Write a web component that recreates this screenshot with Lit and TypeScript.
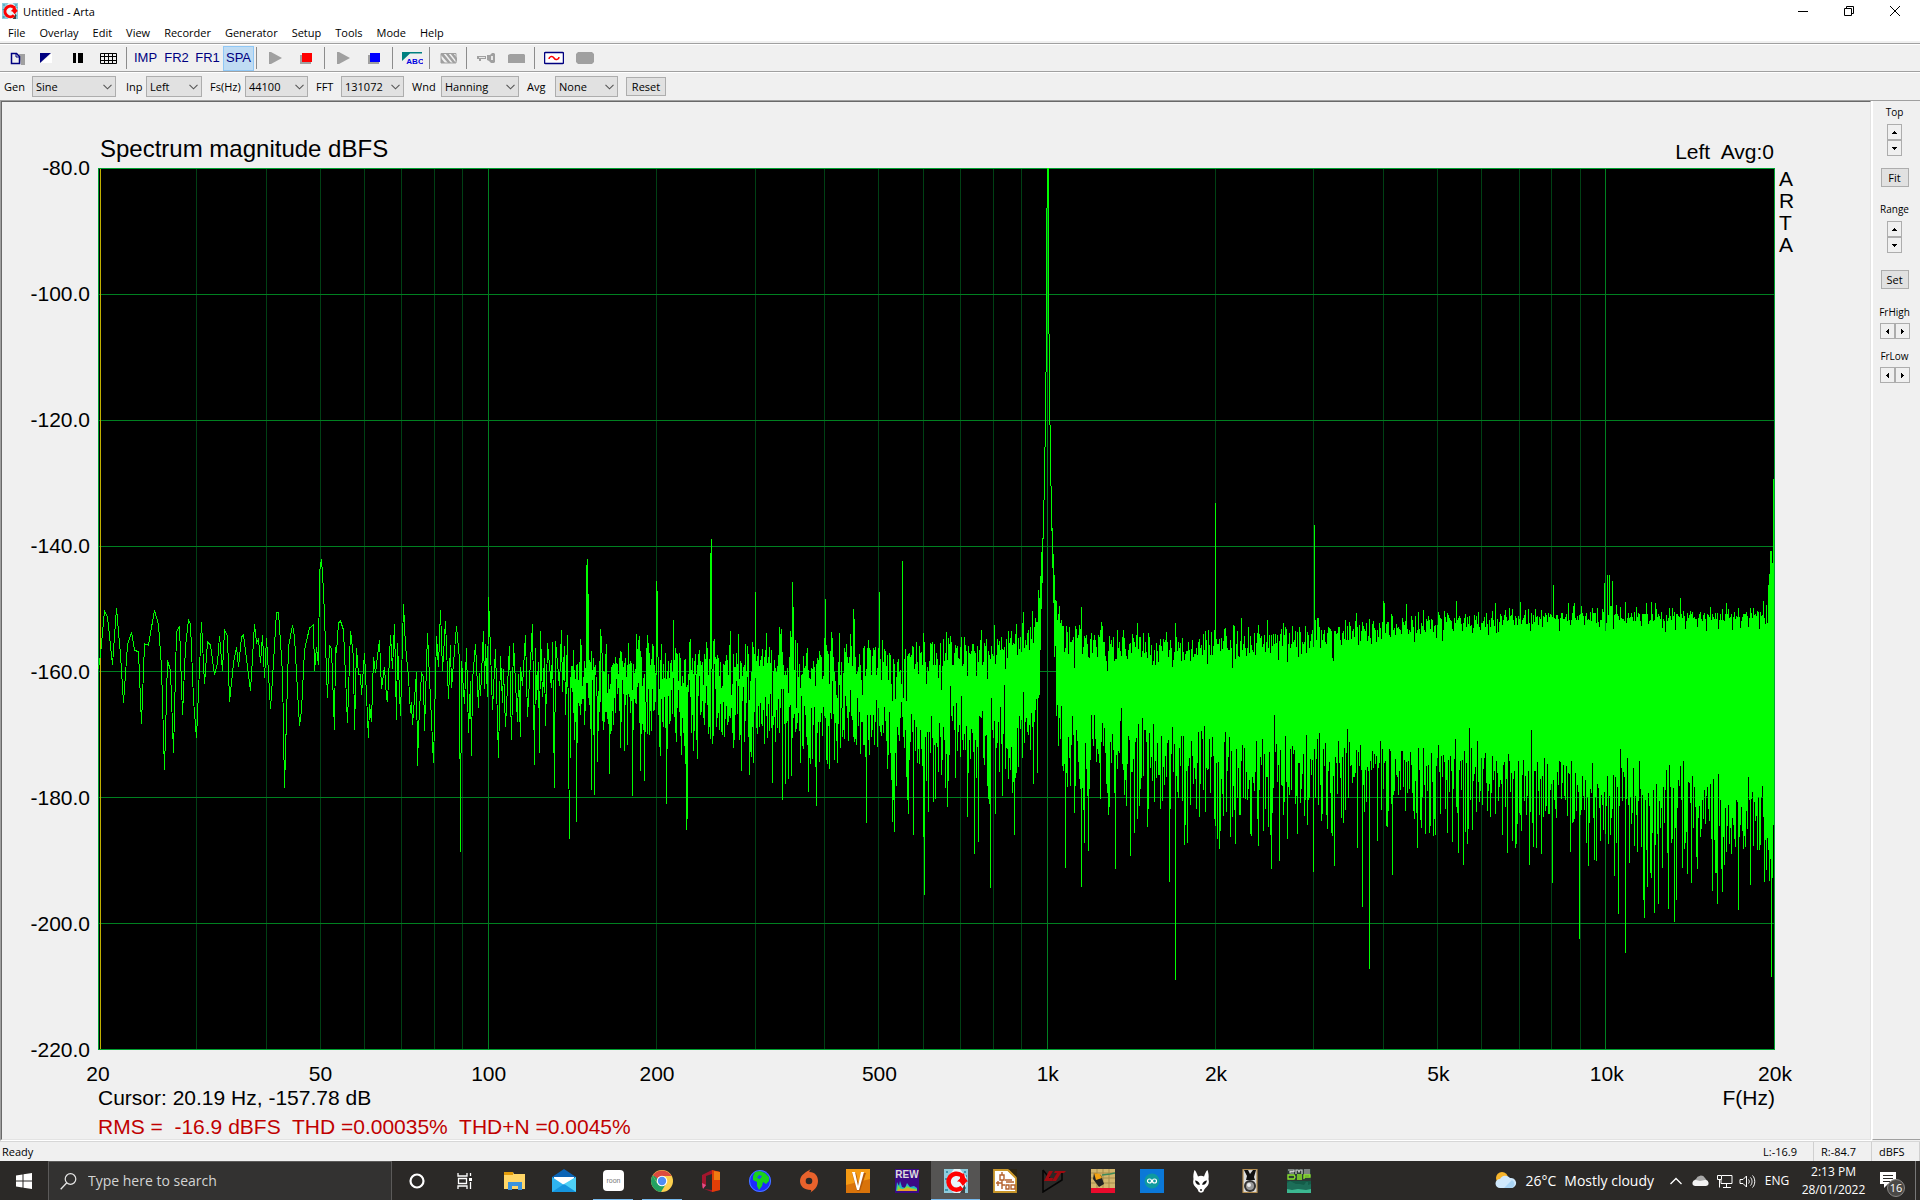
import { LitElement, html, svg, css } from "lit";
import { customElement, property } from "lit/decorators.js";
import { classMap } from "lit/directives/class-map.js";
import { styleMap } from "lit/directives/style-map.js";

/* ------------------------------------------------------------------ */
/* Spectrum data                                                       */
/* ------------------------------------------------------------------ */

const PLOT_W = 1677;
const PLOT_H = 882;
const DB_TOP = -80;
const DB_BOTTOM = -220;
const F_LOW = 20;
const DECADES = 3;

const freqToRatio = (f: number) => Math.log10(f / F_LOW) / DECADES;
const dbToRatio = (db: number) => (DB_TOP - db) / (DB_TOP - DB_BOTTOM);

type Point = [number, number];

interface Block {
  x: number;
  y: number;
  sx: number;
  sy: number;
}

function parse(block: Block, text: string): Point[] {
  return text
    .trim()
    .split(/\s+/)
    .map((pair) => {
      const [x, y] = pair.split(",").map(Number);
      return [Math.floor(block.x + x / block.sx), Math.round(block.y + y / block.sy)] as Point;
    });
}

const LOW: Block = { x: -8, y: 372, sx: 3, sy: 3 };
const MID: Block = { x: 462, y: 332, sx: 3, sy: 3 };
const HIGH: Block = { x: 942, y: 312, sx: 3, sy: 3 };
const TOP: Block = { x: 1302, y: 292, sx: 3, sy: 2.904 };

const LOW_LINE = `24,386 30,345 43,213 53,232 67,374 80,204 92,345 100,489 112,315 124,277 133,331 144,335 154,551
164,311 176,316 193,210 205,255 214,380 223,689 232,361 241,392 250,638 259,275 268,259 277,524 287,320 295,240
301,252 310,480 319,593 334,246 343,431 352,307 361,315 373,404 382,370 388,288 397,392 403,270 412,288 418,485
430,370 439,322 445,382 454,291 460,286 481,452 493,252 499,310 505,298 511,368 517,286 523,413 529,294 541,506
550,370 559,216 565,216 577,400 583,743 595,322 607,255 613,290 628,557 634,510 643,330 658,265 670,256 673,392
679,321 685,374 688,100 694,57 699,150 712,473 718,316 724,328 733,569 736,322 740,338 745,250 751,243 760,270
772,548 781,273 790,350 793,569 799,324 805,402 811,404 814,464 824,340 835,593 838,492 844,545 850,351 856,398
868,300 874,446 883,381 888,470 892,485 901,286 907,386 913,252 919,539 923,310 931,527 940,192 947,318 955,410
961,518 964,487 967,554 979,396 982,677 985,570 994,400 1000,410 1003,572 1012,279 1018,415 1030,668 1039,289
1045,382 1051,210 1057,394 1066,244 1075,476 1081,315 1084,443 1099,259 1108,360 1111,935 1114,363 1123,491
1129,324 1135,578 1141,423 1144,647 1147,420 1156,312 1165,503 1168,400 1171,467 1180,274 1183,446 1186,312
1192,470 1195,171 1201,330 1207,509 1217,328 1225,653 1231,349 1237,488 1240,388 1246,560 1258,319 1264,599
1269,310 1281,545 1285,402 1291,590 1292,381 1297,437 1306,286 1312,530 1327,252 1333,674 1336,324 1339,480
1345,366 1348,638 1351,274 1357,470 1363,354 1366,557 1372,310 1384,443 1386,307 1393,743 1397,304 1408,437
1414,270 1417,455 1423,319 1426,524 1432,286 1438,896`;

const MID_TOPS = `1,400 4,390 7,465 10,495 13,438 16,545 19,438 22,405 25,484 28,534 31,530 37,498 46,537 49,495 52,492
55,540 58,486 61,417 64,435 67,558 70,530 76,504 79,195 82,177 85,282 88,480 91,486 97,510 103,500 106,495 109,532
112,588 115,573 118,484 121,387 124,408 127,459 130,514 136,462 139,432 142,579 145,522 148,567 151,552 157,495
163,492 166,471 172,492 178,474 184,456 187,484 196,474 199,530 205,429 208,492 217,570 220,492 229,402 232,447
235,420 238,408 241,453 244,471 247,558 250,534 256,606 259,444 262,405 265,430 268,459 274,477 277,432 280,438
283,495 289,243 292,273 295,471 298,567 301,480 304,432 307,537 310,492 316,459 319,537 322,514 328,534 334,480
337,516 340,360 346,444 349,459 355,543 358,459 364,558 367,528 370,549 376,477 379,561 382,555 388,426 391,417
394,510 403,484 406,462 409,522 412,495 418,450 424,495 430,555 439,426 442,444 445,525 451,159 454,117 457,507
460,423 463,417 466,471 472,465 475,474 484,564 487,558 493,495 499,465 502,480 508,435 511,393 514,585 517,552
523,500 529,459 532,492 535,402 541,484 547,528 550,500 556,432 562,438 565,462 568,600 571,543 577,426 580,441
583,462 586,276 589,484 595,447 598,498 604,468 607,447 613,471 616,450 619,399 622,490 628,441 634,450 637,648
640,514 646,504 652,498 655,465 658,381 661,402 664,387 670,495 676,514 682,504 685,579 688,471 691,393 694,411
697,246 700,321 703,510 706,420 709,624 712,429 715,531 721,564 727,522 733,504 739,459 742,444 745,510 751,537
754,504 760,484 766,558 769,492 775,480 778,453 781,465 787,537 793,414 796,297 799,435 802,453 805,462 808,552
814,396 817,414 820,471 826,543 829,585 832,594 835,486 838,399 844,486 847,624 850,519 853,444 859,432 862,471
871,402 874,438 880,327 883,357 886,471 892,516 898,462 904,540 907,585 910,444 913,438 916,528 925,420 931,450
934,525 940,444 946,441 949,525 958,276 961,477 964,540 967,420 970,486 979,498 985,540 988,459 991,465 994,552
997,603 1000,477 1003,492 1006,597 1009,531 1015,477 1018,516 1024,552 1027,183 1030,594 1033,477 1039,603
1042,468 1045,462 1051,471 1057,438 1060,441 1063,507 1069,426 1075,522 1078,438 1084,456 1090,399 1093,426
1096,486 1099,552 1105,514 1117,426 1120,495 1129,459 1135,534 1141,429 1144,570 1150,417 1159,396 1165,414
1171,408 1174,426 1180,495 1183,459 1192,438 1198,477 1204,411 1207,498 1213,411 1216,435 1222,528 1231,462
1243,453 1249,528 1252,438 1264,390 1267,495 1276,438 1282,537 1285,453 1294,438 1303,375 1306,492 1315,435
1324,411 1333,441 1336,507 1345,393 1354,393 1360,429 1369,372 1366,402 1372,465 1378,447 1387,370 1390,336
1396,420 1402,400 1405,390 1411,381 1417,333 1420,430 1423,381 1426,354 1429,366 1432,366 1435,270 1438,294
1441,228 1444,156 1447,114 1450,0`;

const MID_LOWS = `1,480 4,500 7,575 10,564 13,545 16,645 19,486 22,486 25,582 28,1017 31,774 34,564 37,576 40,640 43,720
46,666 49,966 52,729 55,610 61,645 64,612 67,597 70,597 73,675 76,633 79,549 82,550 85,594 88,615 91,687 94,870
97,540 100,705 103,885 106,524 109,588 112,786 115,693 118,636 121,606 124,460 127,663 130,690 133,666 136,636
139,636 142,658 145,672 148,822 151,702 154,693 157,633 160,675 163,594 169,537 172,582 175,564 178,633 181,744
187,540 190,582 193,753 196,615 199,585 202,735 205,582 208,591 211,640 214,603 217,888 220,690 223,597 229,612
232,561 235,549 238,669 241,813 244,702 247,672 250,690 253,843 256,696 259,606 265,567 271,633 277,567 283,630
286,606 289,525 292,471 295,645 298,741 301,768 304,597 310,681 313,591 319,912 322,747 325,588 331,663 334,570
337,642 340,534 343,651 349,726 352,624 355,570 361,708 364,765 367,654 370,699 373,738 376,792 379,990 382,957
385,576 388,540 391,591 394,699 400,753 403,693 406,525 409,720 412,777 415,588 418,528 424,636 430,654 436,609
439,558 445,702 448,681 451,717 454,507 457,732 460,708 463,492 466,567 472,654 475,640 478,690 481,612 487,705
490,606 493,711 499,618 505,666 511,654 514,624 517,699 520,744 523,720 526,645 529,543 532,642 535,558 538,720
541,705 544,813 547,603 550,561 553,726 556,663 559,609 562,531 565,711 568,825 571,756 574,771 577,681 580,789
586,534 589,684 592,702 595,618 598,681 604,672 610,630 613,732 619,648 622,714 625,612 628,693 631,582 634,684
637,849 640,675 646,726 649,630 655,597 661,624 664,567 667,900 670,567 676,852 679,669 685,837 688,621 691,615
694,828 697,714 700,654 709,687 712,669 718,693 721,789 727,738 730,747 736,645 742,735 745,876 748,774 751,792
754,624 757,777 760,675 766,801 769,918 772,699 778,786 781,666 787,708 790,621 796,654 799,780 802,792 805,678
808,807 811,639 817,543 820,642 823,780 829,723 832,789 838,555 841,744 844,624 850,690 853,717 856,588 862,654
865,723 871,570 877,660 880,711 883,726 889,735 892,594 898,636 901,762 904,666 910,735 916,771 919,969 922,645
925,720 928,765 934,711 937,690 940,645 943,735 946,666 952,741 958,678 961,696 964,708 967,675 973,621 979,723
982,807 985,765 988,636 991,759 994,840 997,966 1000,900 1003,996 1006,759 1009,858 1012,681 1018,723 1021,654
1027,651 1030,711 1033,744 1036,690 1039,831 1042,900 1045,942 1048,780 1051,726 1057,696 1060,1005 1063,660
1066,753 1069,681 1072,789 1075,747 1078,792 1081,690 1087,798 1090,1010 1093,1185 1096,711 1099,843 1102,696
1105,936 1111,759 1117,714 1120,906 1123,735 1126,897 1129,729 1135,816 1141,711 1144,825 1147,780 1150,681
1156,864 1159,762 1162,921 1165,843 1168,765 1171,558 1177,663 1180,618 1186,834 1189,609 1192,753 1201,771
1204,588 1213,702 1219,678 1222,951 1225,820 1231,777 1234,687 1240,756 1243,1062 1246,720 1249,834 1252,741
1255,1026 1258,648 1267,633 1270,774 1273,795 1276,708 1282,858 1285,897 1288,912 1291,1164 1294,594 1300,714
1303,663 1306,942 1309,744 1315,666 1318,816 1324,732 1327,888 1330,702 1333,555 1336,807 1342,747 1345,837
1348,774 1351,810 1354,741 1357,879 1360,846 1363,1005 1366,834 1369,819 1372,684 1375,801 1381,687 1384,660
1390,576 1393,729 1399,654 1402,696 1405,705 1408,675 1411,750 1414,640 1417,681 1420,852 1423,666 1426,630
1429,597 1432,819 1435,594 1438,585 1441,450 1444,326 1447,248 1450,117`;

const HIGH_TOPS = `49,362 52,420 55,402 58,378 61,430 64,420 67,438 70,438 73,516 76,504 79,438 82,456 85,522 88,441
91,486 94,486 97,480 100,471 103,564 106,438 109,447 112,474 115,465 118,435 121,447 124,381 127,522 130,500
133,468 136,474 139,465 142,492 145,531 148,534 151,477 154,459 157,519 160,480 163,465 166,480 172,531 175,465
181,450 184,426 187,438 190,486 196,528 199,543 202,573 205,514 211,492 217,500 220,471 223,543 226,537 229,537
232,450 235,504 244,528 250,450 253,474 259,528 262,537 268,492 274,519 280,474 286,500 289,465 292,429 295,507
298,471 304,531 310,459 313,519 322,534 325,459 331,525 337,555 340,543 343,510 346,555 349,489 355,546 361,477
367,514 373,486 379,456 385,531 391,480 397,561 400,540 406,429 409,471 412,514 421,489 424,543 427,474 433,540
442,514 451,543 457,480 460,531 466,522 472,525 478,477 484,495 490,462 493,510 496,453 502,552 505,450 508,495
514,456 517,525 523,450 526,69 529,477 535,492 541,514 547,507 553,447 556,444 559,468 565,510 574,504 577,564
580,435 583,438 586,537 592,453 595,528 598,531 601,483 604,414 607,510 613,468 619,528 625,441 628,519 631,468
640,516 643,459 646,525 652,459 655,435 661,474 667,500 676,516 682,420 691,519 694,465 703,492 715,540 721,462
724,447 727,498 730,429 736,441 739,447 742,546 751,504 757,438 763,480 769,500 775,531 778,441 784,522 793,486
796,438 799,519 808,504 814,462 820,500 823,135 826,420 829,480 832,414 835,414 838,441 841,504 844,450 847,480
853,450 859,492 865,441 868,444 874,453 877,534 880,543 883,453 889,462 898,441 904,495 910,453 916,420 922,438
925,480 928,426 934,477 940,447 946,423 949,399 952,441 955,495 961,484 967,426 970,438 979,429 982,484 988,417
994,492 997,432 1000,423 1009,486 1018,429 1024,477 1030,363 1033,369 1036,459 1039,432 1042,426 1051,471
1054,402 1057,408 1060,450 1075,441 1087,414 1096,423 1099,372 1105,462 1114,408 1117,420 1123,486 1126,408
1129,459 1135,396 1141,462 1150,390 1156,459 1165,408 1174,417 1180,456 1189,474 1195,396 1198,405 1201,414
1207,484 1213,393 1222,399 1225,405 1231,420 1240,453 1243,414 1249,363 1255,414`;

const HIGH_LOWS = `49,708 52,675 55,798 58,714 61,777 64,678 67,858 70,873 73,852 76,1164 79,879 82,921 85,771 88,834
91,918 94,795 97,708 100,765 103,999 106,918 109,750 112,783 115,846 118,897 121,927 124,1221 127,924 130,990
133,1089 136,789 139,867 142,948 145,1113 148,927 151,840 154,705 157,777 160,798 163,705 166,777 172,807 175,822
178,850 181,957 184,786 187,729 190,798 193,744 196,820 199,912 202,939 205,1005 208,981 211,786 214,850 220,810
223,939 226,1167 229,825 232,867 235,813 238,819 241,723 244,684 247,852 250,870 253,945 256,900 259,978 262,852
268,780 271,1128 274,876 277,876 280,837 283,1059 286,786 289,774 292,1017 295,732 298,978 301,927 304,894
307,714 310,888 313,750 316,750 319,786 322,1041 325,987 328,759 331,864 337,903 343,966 346,843 352,789 355,885
358,885 361,987 364,768 367,963 370,861 373,915 376,828 379,891 385,780 388,1206 391,987 394,822 400,876 403,792
406,1500 409,888 412,936 415,954 418,804 421,858 424,768 427,963 430,768 433,1095 436,1035 439,873 442,1089
448,834 451,975 454,783 460,912 463,864 469,987 475,756 478,1011 481,912 484,753 487,777 490,930 493,738 496,996
499,864 505,867 508,777 511,939 517,771 520,828 523,1017 526,1038 529,850 532,1077 535,846 538,1107 541,1053
544,897 550,1008 553,786 559,996 562,873 565,831 571,1071 574,813 577,1011 580,918 583,990 586,1092 589,807
592,954 595,864 598,1005 601,1005 604,843 610,954 613,804 619,876 622,960 628,900 631,1062 634,1068 637,891
643,933 649,783 652,1017 655,1098 658,930 664,855 670,1053 673,822 676,987 679,891 685,1041 688,816 691,1065
694,1167 697,999 700,924 703,705 706,816 712,906 718,1143 721,810 724,915 730,1005 733,966 739,906 742,1077
745,921 751,807 754,930 760,822 766,972 769,948 772,1062 775,850 781,969 784,927 790,822 793,1008 799,765
802,1035 805,960 811,837 814,885 817,840 820,1176 823,807 829,837 832,777 835,975 838,759 841,915 844,1023
847,1002 850,807 853,858 859,1005 862,1047 868,846 874,1059 877,1068 880,888 883,1158 886,831 892,942 895,783
898,850 904,1014 907,831 910,1029 916,990 922,747 925,954 928,786 934,855 937,909 946,879 949,810 952,1104
955,816 961,795 964,870 967,1281 970,915 973,996 976,870 979,966 985,873 988,1467 991,843 997,813 1006,852
1012,1083 1018,850 1021,783 1024,990 1027,807 1030,927 1036,843 1039,1038 1042,1041 1045,993 1048,807 1054,972
1057,1185 1060,945 1066,837 1072,891 1075,945 1078,873 1081,930 1087,813 1090,921 1096,993 1099,846 1102,939
1108,927 1114,855 1117,939 1123,1017 1126,903 1129,999 1132,1104 1135,804 1138,870 1144,1044 1147,954 1150,804
1156,1062 1162,933 1168,1059 1171,1038 1174,819 1180,1068 1186,1065 1189,858 1195,795 1198,876 1201,1002
1210,825 1219,900 1222,1059 1225,840 1228,936 1237,1086 1240,927 1246,777 1249,981 1252,999 1255,1119`;

const TOP_TOPS = `1,494 7,459 19,418 28,494 34,453 43,528 46,453 55,441 70,436 76,500 85,453 94,462 109,517 115,441
118,450 127,526 133,438 142,444 157,490 169,409 172,465 187,497 196,447 207,453 217,502 223,450 235,441 241,494
259,444 265,507 277,438 286,415 289,502 295,499 301,447 316,436 328,430 337,433 352,479 361,412 376,436 385,433
391,497 394,444 406,433 415,479 424,436 427,485 436,444 445,444 460,363 478,497 487,444 505,415 511,479 520,425
523,415 529,465 544,424 553,479 568,465 577,430 589,473 592,430 598,485 607,433 613,357 616,497 619,473 622,334
625,450 628,334 631,424 634,424 637,351 640,490 649,421 661,427 676,412 679,473 709,427 724,482 739,415 745,476
754,412 763,465 766,415 769,433 787,488 796,499 808,430 817,430 826,494 841,401 850,438 856,490 871,438 892,485
913,444 919,497 931,427 946,444 955,491 967,433 979,415 985,433 997,494 1003,441 1015,430 1021,488 1033,447
1045,485 1051,430 1060,430 1078,491 1084,453 1087,450 1090,409 1093,459 1096,476 1099,421 1102,473 1105,363
1108,331 1111,264 1114,264 1117,299 1120,55`;

const TOP_LOWS = `1,958 4,845 7,845 10,949 13,871 16,1019 19,877 22,967 25,874 28,955 34,886 40,1019 43,1042 46,932
49,1025 52,1127 55,836 58,900 61,1045 64,1069 67,980 70,836 73,944 76,1086 82,961 88,1083 91,1063 94,851 97,935
100,1092 103,1042 106,1089 109,889 112,865 115,828 118,906 121,1028 127,920 130,857 133,877 139,929 142,1083
145,871 148,964 151,859 154,903 157,1109 160,955 163,868 166,810 169,1008 172,1025 175,1141 178,900 181,874
184,958 187,871 190,1176 193,845 196,1080 199,880 202,1115 205,1072 208,778 211,987 214,836 217,1074 220,932
229,1022 232,816 235,935 238,993 244,865 250,897 253,865 256,851 259,938 262,1019 268,941 274,967 277,859
280,929 283,903 286,1028 292,909 298,950 304,941 307,1089 310,886 313,877 316,1008 319,926 322,1141 325,854
328,874 331,964 337,1106 340,926 343,903 346,1127 349,1115 352,1057 355,874 361,1031 364,1077 367,915 370,871
373,990 376,918 379,1031 385,903 388,1176 391,1022 394,784 397,1054 400,1124 403,903 406,903 409,1127 412,877
418,1031 421,926 424,1144 427,918 430,1037 433,865 439,1005 442,883 448,1028 451,958 457,1228 460,929 466,1013
472,906 478,874 481,877 484,984 490,886 496,987 499,889 502,1034 505,909 511,1138 514,874 520,1051 523,1042
526,909 529,1019 532,944 538,1391 541,1031 544,1016 550,976 553,1016 559,1112 562,980 565,1179 568,1054 577,880
580,1040 583,1161 586,980 589,1164 592,941 601,1106 604,973 610,1074 613,964 616,1086 622,918 625,1115 628,976
631,1089 637,1013 640,915 643,1208 646,920 649,1112 652,950 655,1318 658,1005 661,839 664,894 667,990 670,906
673,920 676,1432 679,984 682,865 685,1002 688,1170 691,980 694,1057 700,894 703,1121 706,976 712,1138 718,874
724,1124 727,973 730,1278 733,1330 736,987 739,1132 742,1240 745,967 751,1199 754,1214 757,1083 760,958 763,1315
766,1118 769,941 775,1289 778,990 781,1069 787,1185 790,950 793,1054 796,958 799,900 802,1141 805,1304 808,886
811,950 814,1112 820,952 823,1342 826,1069 829,1278 832,1010 835,929 841,889 844,987 847,1185 850,874 853,1130
856,1112 859,1080 862,1202 865,935 868,938 874,1228 877,918 880,1069 883,950 889,1153 892,1188 895,1040 898,1005
904,1072 907,987 913,958 916,1057 922,950 928,1048 931,941 937,1251 940,926 943,1103 946,1199 949,1199 952,1289
955,912 958,1063 961,987 964,1188 967,1254 970,1095 973,1176 976,1010 979,1138 985,1002 994,1144 997,1040
1006,1124 1009,987 1012,993 1015,1307 1018,1095 1024,1008 1027,1077 1036,1124 1039,1019 1045,920 1048,987
1051,1234 1054,984 1057,964 1060,1121 1066,1048 1072,1132 1078,1132 1084,980 1087,947 1090,1037 1093,1225
1096,1103 1099,1191 1102,1098 1105,1132 1108,1222 1111,1159 1114,1501 1117,1214 1120,1060`;

/* Skirts of the 1 kHz tone: column, upper end, lower end. */
const TONE: [number, number, number][] = [
  [941, 430, 527], [942, 408, 482], [943, 384, 441], [944, 370, 415], [945, 332, 371], [946, 279, 332],
  [947, 204, 279], [948, 40, 204], [949, 0, 40], [950, 0, 166], [951, 166, 257], [952, 257, 318],
  [953, 318, 363], [954, 360, 400], [955, 386, 435], [956, 407, 489], [957, 432, 478], [958, 433, 548],
];

/* Noise floor between the listed columns: x, mean top, mean bottom, spread of both. */
const FLOOR: [number, number, number, number, number][] = [
  [462, 495, 545, 14, 20],
  [700, 498, 550, 14, 22],
  [900, 482, 562, 12, 26],
  [960, 470, 570, 10, 28],
  [1100, 480, 595, 8, 34],
  [1240, 466, 605, 8, 34],
  [1340, 455, 615, 7, 30],
  [1480, 449, 630, 5, 26],
  [1676, 448, 660, 5, 30],
];

function random(seed: number) {
  let s = seed;
  return () => {
    s = (Math.imul(s, 1664525) + 1013904223) >>> 0;
    return s / 4294967296;
  };
}

function floorAt(x: number) {
  let i = 1;
  while (i < FLOOR.length - 1 && FLOOR[i][0] < x) i++;
  const a = FLOOR[i - 1];
  const b = FLOOR[i];
  const t = (x - a[0]) / (b[0] - a[0]);
  return a.map((v, k) => v + (b[k] - v) * t);
}

function tracePath(): string {
  const line = parse(LOW, LOW_LINE);
  let d = "M" + line.map(([x, y]) => `${x + 0.5} ${y}`).join("L");

  const tops = new Map<number, number>([
    ...parse(MID, MID_TOPS), ...parse(HIGH, HIGH_TOPS), ...parse(TOP, TOP_TOPS),
  ]);
  const lows = new Map<number, number>([
    ...parse(MID, MID_LOWS), ...parse(HIGH, HIGH_LOWS), ...parse(TOP, TOP_LOWS),
  ]);
  for (const [x, a, b] of TONE) {
    tops.set(x, a);
    lows.set(x, b);
  }

  const next = random(20220128);
  for (let x = 472; x < PLOT_W - 1; x++) {
    const [, top, low, st, sl] = floorAt(x);
    const a = tops.get(x) ?? Math.round(top + (next() * 2 - 1) * st);
    let b = lows.get(x) ?? Math.round(low + (next() * 2 - 1) * sl);
    if (b <= a) b = a + 4;
    d += `M${x + 0.5} ${a}V${b}`;
  }
  return d;
}

const TRACE = tracePath();

const Y_TICKS = [-80, -100, -120, -140, -160, -180, -200, -220];
const X_TICKS: [number, string][] = [
  [20, "20"], [50, "50"], [100, "100"], [200, "200"], [500, "500"],
  [1000, "1k"], [2000, "2k"], [5000, "5k"], [10000, "10k"], [20000, "20k"],
];
const MINOR = [
  30, 40, 50, 60, 70, 80, 90, 200, 300, 400, 500, 600, 700, 800, 900,
  2000, 3000, 4000, 5000, 6000, 7000, 8000, 9000,
];
const MAJOR = [100, 1000, 10000];

const gx = (f: number) => Math.floor(freqToRatio(f) * (PLOT_W - 1)) + 0.5;
const gy = (db: number) => Math.round(dbToRatio(db) * (PLOT_H - 1)) + 0.5;

@customElement("spectrum-chart")
class SpectrumChart extends LitElement {
  static styles = css`
    :host {
      display: grid;
      grid-template-columns: 96px minmax(0, 1fr) 95px;
      grid-template-rows: 66px minmax(200px, 1fr) 89px;
      font: 21px/24px "Liberation Sans", Arial, sans-serif;
      color: #000;
      background: #f0f0f0;
      border: 1px solid #696969;
      border-color: #696969 #e3e3e3 #e3e3e3 #696969;
      min-height: 0;
    }
    .head {
      grid-column: 2;
      display: flex;
      justify-content: space-between;
      align-items: flex-end;
      padding: 0 1px 4px 2px;
      white-space: pre;
    }
    h1 {
      font-size: 24px;
      line-height: 30px;
      font-weight: 400;
      margin: 0;
    }
    .yaxis {
      grid-column: 1;
      grid-row: 2;
      position: relative;
    }
    .ytick {
      position: absolute;
      right: 8px;
      transform: translateY(-50%);
    }
    .plot {
      grid-column: 2;
      grid-row: 2;
      display: block;
      width: 100%;
      height: 100%;
      min-height: 0;
      background: #000;
    }
    .brand {
      grid-column: 3;
      grid-row: 2;
      width: 14px;
      padding: 0 4px;
      line-height: 22px;
      overflow-wrap: anywhere;
    }
    .foot {
      grid-column: 2;
      grid-row: 3;
    }
    .xaxis {
      position: relative;
      height: 36px;
    }
    .xtick {
      position: absolute;
      top: 12px;
      transform: translateX(-50%);
    }
    .row {
      display: flex;
      justify-content: space-between;
      white-space: pre;
      margin-bottom: 5px;
    }
    .row:last-child {
      margin-bottom: 0;
    }
    .meter {
      color: #c00000;
    }
    path,
    line,
    rect {
      shape-rendering: crispEdges;
      fill: none;
      stroke-width: 1;
    }
    .minor {
      stroke: #004014;
    }
    .major {
      stroke: #008020;
    }
    .frame {
      stroke: #00a030;
    }
    .trace {
      stroke: #00ff00;
    }
    .cursor {
      stroke: #c0b000;
    }
  `;

  render() {
    return html`
      <div class="head"><h1>Spectrum magnitude dBFS</h1><span>Left  Avg:0</span></div>
      <div class="yaxis">
        ${Y_TICKS.map(
          (v) => html`<span class="ytick" style=${styleMap({ top: `${dbToRatio(v) * 100}%` })}>${v.toFixed(1)}</span>`
        )}
      </div>
      <svg class="plot" viewBox="0 0 ${PLOT_W} ${PLOT_H}" preserveAspectRatio="none" role="img" aria-label="Spectrum">
        ${MINOR.map((f) => svg`<line class="minor" x1=${gx(f)} x2=${gx(f)} y1="0" y2=${PLOT_H} />`)}
        ${MAJOR.map((f) => svg`<line class="major" x1=${gx(f)} x2=${gx(f)} y1="0" y2=${PLOT_H} />`)}
        ${Y_TICKS.map((v) => svg`<line class="major" x1="0" x2=${PLOT_W} y1=${gy(v)} y2=${gy(v)} />`)}
        <rect class="frame" x="0.5" y="0.5" width=${PLOT_W - 1} height=${PLOT_H - 1} />
        <line class="cursor" x1="2.5" x2="2.5" y1="1" y2=${PLOT_H - 1} />
        <path class="trace" d=${TRACE} />
      </svg>
      <div class="brand">ARTA</div>
      <div class="foot">
        <div class="xaxis">
          ${X_TICKS.map(
            ([f, t]) => html`<span class="xtick" style=${styleMap({ left: `${freqToRatio(f) * 100}%` })}>${t}</span>`
          )}
        </div>
        <div class="row"><span>Cursor: 20.19 Hz, -157.78 dB</span><span>F(Hz)</span></div>
        <div class="row meter"><span>RMS =  -16.9 dBFS  THD =0.00035%  THD+N =0.0045%</span></div>
      </div>
    `;
  }
}

/* ------------------------------------------------------------------ */
/* Icons                                                               */
/* ------------------------------------------------------------------ */

const artaIcon = svg`
  <rect width="24" height="24" fill="#e8f6fa"/>
  <path d="M0 0h10l-4 5-3 8 3 7 4 4H0zM16 0h8v24h-6l4-8V8z" fill="#8fcbdc"/>
  <path d="M2 2h2v2H2zM5 6h1v2H5zM1 9h2v2H1zM3 15h2v2H3zM1 20h3v2H1zM20 2h2v2h-2zM22 6h1v2h-1zM20 18h2v2h-2z" fill="#3d95ae"/>
  <path d="M21 15v9h-5z" fill="#444"/>
  <path d="M18 18.500a8 8 0 1 1-1-12.500" fill="none" stroke="#f00" stroke-width="4.500"/>
  <path d="M13 12.500h11l-3-4-1-4h-4v5z" fill="#f00"/><path d="M15 12h8l-4 5z" fill="#f00"/>`;

const TOOL_ICONS: Record<string, unknown> = {
  new: svg`<path d="M13 6h6v11h-4" fill="#a0a0a0"/><path d="M5.500 5.500h5l3 3v7h-8z" fill="#f0f0f0" stroke="#000080" stroke-width="1.500"/><path d="M10 5v4h4" fill="none" stroke="#000080"/>`,
  overlay: svg`<path d="M15 5v10H4z" fill="#fff"/><path d="M3 5h11L3 15z" fill="#000080"/>`,
  pause: svg`<path d="M5 5h3v10H5zM10 5h5v10h-5z" fill="#000"/>`,
  grid: svg`<path d="M1.500 5.500h16v10h-16zM1.500 8.500h16M1.500 12.500h16M5.500 5.500v10M9.500 5.500v10M13.500 5.500v10" fill="none" stroke="#000"/>`,
  play: svg`<path d="M3 4h2l11 6-11 6H3z" fill="#a0a0a0"/>`,
  stop: svg`<path d="M3 7h11v9H3z" fill="#a0a0a0"/><path d="M5 5h10v9H5z" fill="#f00"/>`,
  halt: svg`<path d="M3 7h11v9H3z" fill="#a0a0a0"/><path d="M5 5h10v9H5z" fill="#00f"/>`,
  hatch: svg`<path d="M2 5h2l8 10H9L2 7zM6 5h3l8 10h-3zM11 5h3l4 5v4zM2 10l4 5H2z" fill="#a0a0a0"/><path d="M2 5.500h15v9.500H2z" fill="none" stroke="#a0a0a0"/>`,
  key: svg`<path d="M1 8h9v3H5v2H3v-2H1z" fill="#a0a0a0"/><path d="M11 7h3l2-2h2l1 1v8l-1 1h-3l-2-2-2-1z" fill="#a0a0a0"/><path d="M3 9h6v1H3zM15 8h2v4h-2z" fill="#e8e8e8"/>`,
  box: svg`<path d="M3 6h14l1 1v8H1V7z" fill="#a0a0a0"/>`,
  wave: svg`<rect x=".5" y="4.500" width="19" height="11" rx="1" fill="#fff" stroke="#000080" stroke-width="1.500"/><path d="M5 11c0-2 3-4 5-1s5 1 5-1" fill="none" stroke="#f00" stroke-width="1.500"/>`,
  blob: svg`<path d="M3 4h14l2 2v8l-2 2H3l-2-2V6z" fill="#a0a0a0"/>`,
};

const APP_ICONS: { id: string; label: string; open?: boolean; active?: boolean; art: unknown }[] = [
  { id: "cortana", label: "Cortana", art: svg`<circle cx="12" cy="12" r="6.500" fill="none" stroke="#fff" stroke-width="2.200"/>` },
  { id: "taskview", label: "Task View", art: svg`<path d="M4 4v3h9V4M4 20v-3h9v3M4.500 9.500h8v5h-8zM16.500 4v3M16.500 13v7" fill="none" stroke="#fff" stroke-width="1.300"/><path d="M15 9h3v3h-3z" fill="#fff"/>` },
  { id: "explorer", label: "File Explorer", art: svg`<path d="M1 3h9l1 2h11v15H1z" fill="#ffd667"/><path d="M1 3h9v3H1z" fill="#e29b0a"/><path d="M5 21v-8h14v8h-4v-4H9v4z" fill="#3a92dd"/>` },
  { id: "mail", label: "Mail", art: svg`<path d="M0 8l12-8 12 8v15H0z" fill="#0a63b5"/><path d="M2 8h20v8H2z" fill="#fff"/><path d="M0 8l12 8L24 8v15H0z" fill="#2fb4f0"/><path d="M12 15l12-7v15z" fill="#4fd0f5"/><path d="M0 23l12-8 12 8z" fill="#1595de"/>` },
  { id: "roon", label: "Roon", open: true, art: svg`<rect x="2" y="1" width="21" height="21" rx="4" fill="#fff"/><text x="12.500" y="14" text-anchor="middle" font-family="Liberation Sans, sans-serif" font-size="7" fill="#777">roon</text>` },
  { id: "chrome", label: "Chrome", open: true, art: svg`<circle cx="12" cy="12" r="11" fill="#fcd04f"/><path d="M2.500 6.500A11 11 0 0 0 11 23l5.500-9H7z" fill="#22a162"/><path d="M2.500 6.500L8 15l1-9z" fill="#22a162"/><path d="M3 6a11 11 0 0 1 18.500 1H12l-4 3z" fill="#dc4b3e"/><circle cx="12" cy="12" r="5.300" fill="#fff"/><circle cx="12" cy="12" r="4.200" fill="#4e8df5"/>` },
  { id: "office", label: "Office", art: svg`<path d="M3 6l10-5 8 2v18l-8 2-8-3 8 1V5L7 7v10l-4 2z" fill="#a4162d"/><path d="M13 1l8 2v18l-8 2z" fill="#e03e07"/><path d="M15 2l6 1v8h-6z" fill="#f07a12"/><path d="M3 14l4 2-3 4z" fill="#e0508c"/>` },
  { id: "globe", label: "Globe", art: svg`<circle cx="12" cy="12" r="11" fill="#1c2bff"/><circle cx="12" cy="12" r="10.500" fill="none" stroke="#4a7dff"/><path d="M7 3l5-1 5 2 4 4 0 4-3 3-3-2-1 4-3 4-2-4 0-4-4-2 0-4z" fill="#19d31c"/><path d="M11 6l3 1-2 3-3-1z" fill="#1c4bff"/>` },
  { id: "origin", label: "Origin", art: svg`<path d="M14 0c-1 1-2 2-1.500 3C18 3 21 7 21 12c0 6-4 9-8 12 1-1 1.500-2 1-3C7 21 3 17 3 12 3 6 9 3 14 0z" fill="#e8622c"/><circle cx="12" cy="12" r="3.300" fill="#2b2928"/>` },
  { id: "vsdc", label: "V", art: svg`<rect width="24" height="24" fill="#f59b14"/><path d="M0 16l24-6v14H0z" fill="#d9730a"/><path d="M6 4h4l3 13 3-13h4l-6 18h-3z" fill="#b35a0a"/><path d="M6 3h3l3 14 3-14h3l-5 18h-2z" fill="#fff"/>` },
  { id: "rew", label: "REW", art: svg`<rect width="24" height="24" fill="#3b0a86"/><text x="12" y="9" text-anchor="middle" font-family="Liberation Sans, sans-serif" font-weight="700" font-size="10" fill="#ddd">REW</text><path d="M1 22l1-9 2 4 1-5 2 6 3 1 2-5 3 4 4-1 3 2v3z" fill="#25b4c8"/><path d="M2 22l1-6 2 3 3 1 4-3 4 2 6 1v2z" fill="#7be03a"/><path d="M2 22l2-2h5l4-1 8 2v1z" fill="#e8a02a"/>` },
  { id: "arta", label: "Arta", open: true, active: true, art: artaIcon },
  { id: "kicad", label: "Schematic", art: svg`<path d="M1 1h14l8 7v15H1z" fill="#fff" stroke="#c8962a" stroke-width="1.800"/><path d="M15 0h9v9z" fill="#2b2413"/><path d="M15 1l8 8" stroke="#c8962a" stroke-width="2"/><path d="M9 3v3M7 6h4v5H7zM9 11v9M3 14h6M5 12v5M9 16h3M12 11h7M13 13h8M13 16h3v4h-3zM18 16h4v4h-4z" fill="none" stroke="#b5622e" stroke-width="1.400"/>` },
  { id: "ltspice", label: "LTspice", art: svg`<path d="M1 1v22l19-12V3M1 1l8 10" fill="none" stroke="#050505" stroke-width="1.500"/><path d="M7 2h4l-4 7h4l-1 3H2zM13 2h11l-2 2h-3l-5 8h-4l5-8h-3z" fill="#a00a10"/>` },
  { id: "probe", label: "Probe", art: svg`<rect width="24" height="24" fill="#d2b56c"/><path d="M0 4h24M0 9h24M0 14h24M6 0v19M12 0v19M18 0v19" stroke="#a58c4c" stroke-width="1"/><path d="M11 6l8-1 5-1" stroke="#3d8a5a" stroke-width="1.500" fill="none"/><path d="M3 4l7 2 3 9-5 3-6-8z" fill="#222"/><path d="M3 4l6 1 2 4-6 2z" fill="#f3a313"/><rect y="19" width="24" height="5" fill="#ea0a2c"/>` },
  { id: "arduino", label: "Arduino", art: svg`<rect width="24" height="24" fill="#0b78d8"/><circle cx="12" cy="12" r="7.500" fill="#0f9aa0"/><circle cx="9.500" cy="12" r="2" fill="none" stroke="#fff" stroke-width="1.200"/><circle cx="14.500" cy="12" r="2" fill="none" stroke="#fff" stroke-width="1.200"/>` },
  { id: "foobar", label: "foobar2000", art: svg`<path d="M5.500 1C7 2 8 5 9 7.500c2-1 4-1 6 0C16 5 17 2 18.500 1c1 3 1.500 6 1 9 1 4 0 6-2 8-2 1.500-2.500 3-3 4.500-1 1.500-4 1.500-5 0-.5-1.500-1-3-3-4.500-2-2-3-4-2-8-.5-3 0-6 1-9z" fill="#fff"/><path d="M6 11.500c2 0 4 1.500 5 4-2 1-4 0-5-4zM18 11.500c-2 0-4 1.500-5 4 2 1 4 0 5-4z" fill="#111"/><path d="M11 20h2v2h-2z" fill="#555"/>` },
  { id: "speaker", label: "Speaker", art: svg`<rect x="5" y=".5" width="14" height="23" fill="#ddd" stroke="#b58f52" stroke-width="1.200"/><path d="M6 1h4l2 4 3-4h3l-2 7 1 3H8l1-4z" fill="#111"/><circle cx="12" cy="17" r="6" fill="#333"/><circle cx="12" cy="17" r="4" fill="#999"/><circle cx="11" cy="16" r="2" fill="#eee"/>` },
  { id: "dsp", label: "DSP", art: svg`<rect width="24" height="24" fill="#2c3a36"/><path d="M1 1h6v1.500H3V4h4M9 5V1h2l1 2 1-2h2v4M17 1h6M17 3h6M17 5h6" stroke="#ccc" fill="none" stroke-width="1.200"/><path d="M1 6h6l1 2-1 2H1zM10 6h5M10 8h5M10 10h5M17 10V6h6v2h-6" stroke="#8be62c" fill="none" stroke-width="1.300"/><path d="M0 12h24v10H0z" fill="#145c48"/><path d="M0 14l3-2 6 3 4 0 4 1 2-3h2v3l3-1v9H0z" fill="#1c6e58"/><path d="M0 20l5 1 6-1 8 1 5-1v4H0z" fill="#3cb891"/>` },
];

/* ------------------------------------------------------------------ */
/* Side panel                                                          */
/* ------------------------------------------------------------------ */

@customElement("scale-panel")
class ScalePanel extends LitElement {
  static styles = css`
    :host {
      display: flex;
      flex-direction: column;
      align-items: center;
      width: 48px;
      box-sizing: border-box;
      padding: 4px 4px 0 0;
      font: 10px/14px "Open Sans", "Noto Sans", sans-serif;
      border-bottom: 1px solid #a0a0a0;
      border-left: 1px solid #fff;
      margin-bottom: 1px;
      color: #000;
    }
    .group {
      display: flex;
      flex-direction: column;
      align-items: center;
      gap: 5px;
    }
    .spin {
      display: flex;
    }
    .vertical {
      flex-direction: column;
    }
    button {
      display: grid;
      place-items: center;
      padding: 0;
      box-sizing: border-box;
      border: 1px solid #adadad;
      background: #f0f0f0;
      color: #000;
      font: 11px/14px "Open Sans", "Noto Sans", sans-serif;
    }
    .spin button {
      width: 15px;
      height: 16px;
    }
    .text {
      width: 28px;
      height: 19px;
      background: #e1e1e1;
      margin: 12px 0 15px;
    }
    .last {
      margin: 17px 0 16px;
    }
    .pair {
      gap: 4px;
      margin-bottom: 10px;
    }
    svg {
      width: 5px;
      height: 5px;
      shape-rendering: crispEdges;
    }
  `;

  private arrow(name: string, d: string) {
    return html`<button aria-label=${name}><svg viewBox="0 0 5 5"><path d=${d} /></svg></button>`;
  }

  private vertical(name: string) {
    return html`<div class="group">
      <span>${name}</span>
      <div class="spin vertical">
        ${this.arrow(`${name} up`, "M0 4L2.500 1 5 4z")}${this.arrow(`${name} down`, "M0 1h5L2.500 4z")}
      </div>
    </div>`;
  }

  private horizontal(name: string) {
    return html`<div class="group pair">
      <span>${name}</span>
      <div class="spin">
        ${this.arrow(`${name} down`, "M4 0v5L1 2.500z")}${this.arrow(`${name} up`, "M1 0l3 2.500L1 5z")}
      </div>
    </div>`;
  }

  render() {
    return html`
      ${this.vertical("Top")}
      <button class="text">Fit</button>
      ${this.vertical("Range")}
      <button class="text last">Set</button>
      ${this.horizontal("FrHigh")} ${this.horizontal("FrLow")}
    `;
  }
}

/* ------------------------------------------------------------------ */
/* Taskbar                                                             */
/* ------------------------------------------------------------------ */

@customElement("task-bar")
class TaskBar extends LitElement {
  static styles = css`
    :host {
      display: flex;
      height: 40px;
      background: #2b2927;
      color: #fff;
      font: 14px/20px "Open Sans", "Noto Sans", sans-serif;
    }
    button {
      border: 0;
      padding: 0;
      background: none;
      color: inherit;
      font: inherit;
      display: grid;
      place-items: center;
    }
    .start {
      width: 48px;
    }
    .search {
      display: flex;
      align-items: center;
      gap: 11px;
      width: 344px;
      box-sizing: border-box;
      padding-left: 11px;
      background: #333231;
      border: 1px solid #5b5a59;
    }
    input {
      flex: 1;
      min-width: 0;
      border: 0;
      padding: 0;
      background: none;
      color: #fff;
      font: inherit;
    }
    input::placeholder {
      color: #d4d4d4;
      opacity: 1;
    }
    .apps {
      display: flex;
      flex: 1;
    }
    .app {
      width: 49px;
      border-bottom: 2px solid transparent;
      border-top: 2px solid transparent;
    }
    .open {
      background: linear-gradient(#76b9ed, #76b9ed) center bottom / 40px 2px no-repeat border-box;
    }
    .active {
      background: linear-gradient(#76b9ed, #76b9ed) center bottom / 100% 2px no-repeat border-box #555453;
    }
    .tray {
      display: flex;
      align-items: center;
    }
    .weather {
      display: flex;
      align-items: center;
      gap: 8px;
      margin-right: 10px;
    }
    .icon {
      width: 24px;
    }
    .lang {
      font-size: 12px;
      width: 26px;
      margin-left: 4px;
    }
    .clock {
      font-size: 12px;
      line-height: 18px;
      text-align: center;
      width: 87px;
    }
    .notify {
      width: 38px;
      padding: 6px 8px 0 0;
    }
    .edge {
      width: 4px;
      height: 40px;
      border-left: 1px solid #777;
    }
  `;

  render() {
    return html`
      <button class="start" aria-label="Start">
        <svg width="16" height="16" viewBox="0 0 16 16"><path d="M0 2.500l6.500-1v6H0zM7.500 1.300L16 0v7.500H7.500zM0 8.500h6.500v6l-6.500-1zM7.500 8.500H16V16l-8.500-1.300z" fill="#fff" /></svg>
      </button>
      <label class="search">
        <svg width="17" height="17" viewBox="0 0 17 17"><circle cx="10.500" cy="6" r="5.300" fill="none" stroke="#e6e6e6" stroke-width="1.200" /><path d="M6.800 9.800L.7 16.300" stroke="#e6e6e6" stroke-width="1.300" /></svg>
        <input type="text" placeholder="Type here to search" aria-label="Search" />
      </label>
      <div class="apps">
        ${APP_ICONS.map(
          (a) => html`<button class=${classMap({ app: true, open: !!a.open, active: !!a.active })} aria-label=${a.label}>
            <svg width="24" height="24" viewBox="0 0 24 24">${a.art}</svg>
          </button>`
        )}
      </div>
      <div class="tray">
        <button class="weather">
          <svg width="22" height="20" viewBox="0 0 22 20"><circle cx="7" cy="7" r="6" fill="#f7b52c" /><path d="M5 17a4.500 4.500 0 0 1 0-9 6 6 0 0 1 10-1 5 5 0 0 1 2 10z" fill="#cfe8fb" /><path d="M9 17l8-8a4.500 4.500 0 0 1 0 8z" fill="#a9d4f5" /></svg>
          <span>26°C</span><span>Mostly cloudy</span>
        </button>
        <button class="icon" aria-label="Show hidden icons"><svg width="14" height="10" viewBox="0 0 14 10"><path d="M1.500 8L7 2.500 12.500 8" fill="none" stroke="#fff" stroke-width="1.300" /></svg></button>
        <button class="icon" aria-label="OneDrive"><svg width="17" height="12" viewBox="0 0 17 12"><path d="M3 9a3 3 0 0 1 1-5 5 5 0 0 1 9-1l3 4z" fill="#a9a9a9" /><path d="M3 11a3 3 0 0 1 1-6l4 1 5-1a3 3 0 0 1 1 6z" fill="#f2f2f2" /></svg></button>
        <button class="icon" aria-label="Network"><svg width="17" height="15" viewBox="0 0 17 15"><path d="M6 1.500h10v8H5V6M1.500 1.500h4v4h-4zM3.500 5.500v8M10.500 9.500v4M7 13.500h8" fill="none" stroke="#fff" /></svg></button>
        <button class="icon" aria-label="Volume"><svg width="18" height="15" viewBox="0 0 18 15"><path d="M1 5.500h3l3.500-3.500v11L4 9.500H1z" fill="none" stroke="#fff" /><path d="M9.500 5.500c1 1 1 3 0 4M11.500 3.500c2 2 2 6 0 8M13.500 1.500c3 3 3 9 0 12" fill="none" stroke="#fff" /></svg></button>
        <button class="lang">ENG</button>
        <div class="clock">2:13 PM<br />28/01/2022</div>
        <button class="notify" aria-label="Notifications">
          <svg width="28" height="28" viewBox="0 0 28 28">
            <path d="M2 2h16v12H10l-4 4v-4H2z" fill="#fff" /><path d="M5 5.500h10M5 8.500h10M5 11.500h7" stroke="#2b2927" />
            <circle cx="18" cy="18" r="8.500" fill="#4a4846" stroke="#8a8886" />
            <text x="18" y="22" text-anchor="middle" font-size="11" fill="#fff">16</text>
          </svg>
        </button>
        <div class="edge"></div>
      </div>
    `;
  }
}

/* ------------------------------------------------------------------ */
/* Application window                                                  */
/* ------------------------------------------------------------------ */

const MENUS = ["File", "Overlay", "Edit", "View", "Recorder", "Generator", "Setup", "Tools", "Mode", "Help"];

const TOOLS: { id?: string; text?: string; icon?: string; on?: boolean }[] = [
  { id: "New", icon: "new" }, { id: "Overlay", icon: "overlay" }, { id: "Pause", icon: "pause" }, { id: "Grid", icon: "grid" },
  {},
  { id: "IMP", text: "IMP" }, { id: "FR2", text: "FR2" }, { id: "FR1", text: "FR1" }, { id: "SPA", text: "SPA", on: true },
  {},
  { id: "Record", icon: "play" }, { id: "Stop", icon: "stop" },
  {},
  { id: "Generate", icon: "play" }, { id: "Stop generator", icon: "halt" },
  {},
  { id: "Label", icon: "abc" },
  {},
  { id: "Hatch", icon: "hatch" },
  {},
  { id: "Calibrate", icon: "key" }, { id: "Device", icon: "box" },
  {},
  { id: "Wave", icon: "wave" }, { id: "Level", icon: "blob" },
];

const FIELDS = [
  { id: "gen", label: "Gen", value: "Sine" },
  { id: "inp", label: "Inp", value: "Left" },
  { id: "rate", label: "Fs(Hz)", value: "44100" },
  { id: "fft", label: "FFT", value: "131072" },
  { id: "wnd", label: "Wnd", value: "Hanning" },
  { id: "avg", label: "Avg", value: "None" },
];

@customElement("app-root")
class AppRoot extends LitElement {
  @property() status = "Ready";

  static styles = css`
    :host {
      display: flex;
      flex-direction: column;
      min-height: 100vh;
      background: #f0f0f0;
      color: #000;
      font: 11px/16px "Open Sans", "Noto Sans", sans-serif;
    }
    button,
    select {
      font: inherit;
      color: inherit;
    }
    .title {
      display: flex;
      align-items: flex-start;
      height: 23px;
      background: #fff;
      padding-left: 2px;
    }
    .title .logo {
      margin: 3px 5px 0 0;
    }
    .title .name {
      flex: 1;
      margin-top: 4px;
    }
    .caption {
      width: 46px;
      height: 21px;
      border: 0;
      padding: 0;
      background: none;
      display: grid;
      place-items: center;
    }
    .caption:last-child {
      margin-right: 2px;
    }
    .menu {
      display: flex;
      gap: 14px;
      height: 18px;
      padding: 2px 8px 0;
      box-sizing: border-box;
      background: #fff;
    }
    .menu a {
      color: #000;
      text-decoration: none;
    }
    .tools {
      display: flex;
      align-items: center;
      height: 26px;
      margin-top: 2px;
      border-top: 1px solid #a0a0a0;
      box-shadow: inset 0 1px #fff;
      padding-top: 1px;
    }
    .tool {
      width: 31px;
      height: 25px;
      box-sizing: border-box;
      border: 1px solid transparent;
      background: none;
      padding: 0;
      display: grid;
      place-items: center;
      font: 13px/16px "Liberation Sans", Arial, sans-serif;
      color: #000080;
    }
    .on {
      background: #c0dcf3;
      border-color: #90c8f6;
    }
    .sep {
      width: 1px;
      height: 22px;
      margin: 0 3px 0 2px;
      background: #8c8c8c;
    }
    .fields {
      display: flex;
      align-items: center;
      gap: 8px;
      height: 27px;
      padding: 1px 4px 0;
      border-top: 1px solid #a0a0a0;
      box-shadow: inset 0 1px #fff;
    }
    .field {
      display: grid;
      align-items: center;
    }
    .gen {
      grid-template-columns: 28px 84px;
    }
    .inp {
      grid-template-columns: 20px 56px;
      margin-left: 2px;
    }
    .rate {
      grid-template-columns: 35px 63px;
    }
    .fft {
      grid-template-columns: 25px 63px;
    }
    .wnd {
      grid-template-columns: 29px 78px;
    }
    .avg {
      grid-template-columns: 28px 63px;
    }
    select {
      grid-area: 1 / 2;
      height: 21px;
      width: 100%;
      box-sizing: border-box;
      appearance: none;
      border: 1px solid #adadad;
      border-radius: 0;
      background: #e1e1e1;
      padding: 0 0 0 3px;
    }
    .chevron {
      grid-area: 1 / 2;
      justify-self: end;
      margin-right: 4px;
      pointer-events: none;
    }
    .reset {
      width: 40px;
      height: 19px;
      padding: 0;
      border: 1px solid #adadad;
      background: #e1e1e1;
    }
    .work {
      flex: 1;
      display: grid;
      grid-template-columns: minmax(0, 1fr) 49px;
      border-top: 1px solid #a0a0a0;
      min-height: 0;
    }
    .view {
      display: grid;
      border-left: 1px solid #a0a0a0;
      border-bottom: 1px solid #fff;
      min-width: 0;
    }
    .side {
      display: grid;
      border-left: 1px solid #fff;
    }
    .status {
      display: flex;
      height: 19px;
      line-height: 20px;
      border-top: 1px solid #d7d7d7;
    }
    .ready {
      flex: 1;
      padding-left: 2px;
    }
    .cell {
      box-sizing: border-box;
      width: 58px;
      padding-left: 7px;
      border-right: 1px solid #d0d0d0;
    }
    .unit {
      width: 48px;
    }
  `;

  private icon(name: string) {
    if (name === "abc") {
      return html`<svg width="22" height="20" viewBox="0 0 22 20">
        <path d="M1 4h20v1.500H9L1 13z" fill="#008080" />
        <text x="14" y="16" text-anchor="middle" font-family="Liberation Sans, sans-serif" font-weight="700" font-size="8" fill="#0000e0">ABC</text>
      </svg>`;
    }
    return html`<svg width="20" height="20" viewBox="0 0 20 20">${TOOL_ICONS[name]}</svg>`;
  }

  render() {
    return html`
      <header class="title">
        <svg class="logo" width="16" height="16" viewBox="0 0 24 24">${artaIcon}</svg>
        <span class="name">Untitled - Arta</span>
        <button class="caption" aria-label="Minimize"><svg width="10" height="10" viewBox="0 0 10 10"><path d="M0 5.500h10" stroke="#000" /></svg></button>
        <button class="caption" aria-label="Restore"><svg width="10" height="10" viewBox="0 0 10 10"><path d="M.5 2.500h7v7h-7zM2.500 2.500v-2h7v7h-2" fill="none" stroke="#000" /></svg></button>
        <button class="caption" aria-label="Close"><svg width="10" height="10" viewBox="0 0 10 10"><path d="M0 0l10 10M10 0L0 10" stroke="#000" /></svg></button>
      </header>
      <nav class="menu">${MENUS.map((m) => html`<a href="#">${m}</a>`)}</nav>
      <div class="tools">
        ${TOOLS.map((t) =>
          t.id
            ? html`<button class=${classMap({ tool: true, on: !!t.on })} aria-label=${t.id}>${t.text ?? this.icon(t.icon!)}</button>`
            : html`<span class="sep"></span>`
        )}
      </div>
      <div class="fields">
        ${FIELDS.map(
          (f) => html`<div class="field ${f.id}">
            <label for=${f.id}>${f.label}</label>
            <select id=${f.id}><option>${f.value}</option></select>
            <svg class="chevron" width="9" height="6" viewBox="0 0 9 6"><path d="M.5.800l4 4 4-4" fill="none" stroke="#555" stroke-width="1.100" /></svg>
          </div>`
        )}
        <button class="reset">Reset</button>
      </div>
      <main class="work">
        <div class="view"><spectrum-chart></spectrum-chart></div>
        <div class="side"><scale-panel></scale-panel></div>
      </main>
      <footer class="status">
        <span class="ready">${this.status}</span>
        <span class="cell">L:-16.9</span><span class="cell">R:-84.7</span><span class="cell unit">dBFS</span>
      </footer>
      <task-bar></task-bar>
    `;
  }
}
